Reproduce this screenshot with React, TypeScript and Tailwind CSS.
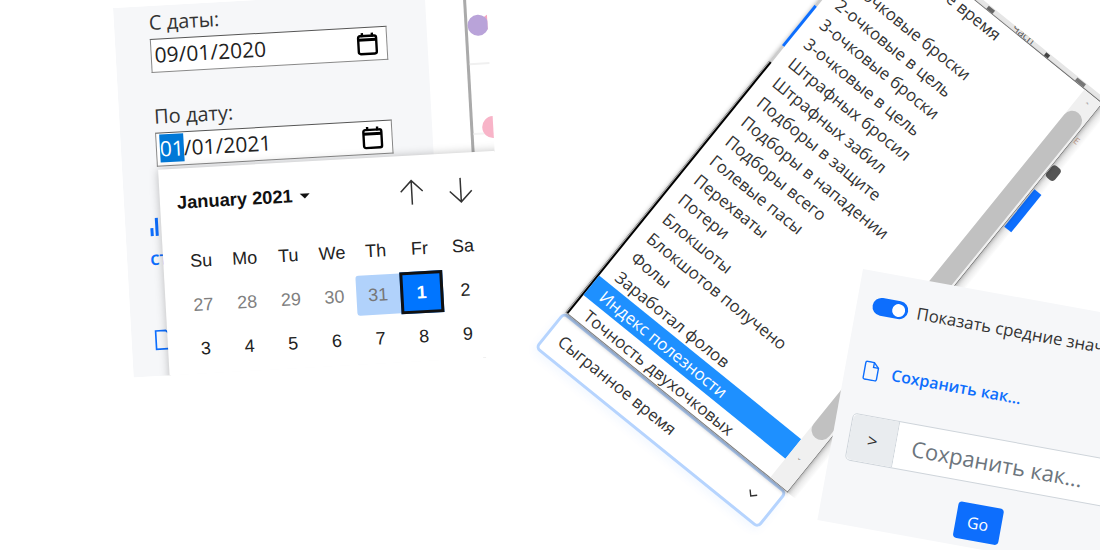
const sans = "font-['Open_Sans','Noto_Sans',sans-serif]";

const items = [
  "Сыгранное время", "Очки", "2-очковые броски", "2-очковые в цель", "3-очковые броски", "3-очковые в цель",
  "Штрафных бросил", "Штрафных забил", "Подборы в защите", "Подборы в нападении", "Подборы всего",
  "Голевые пасы", "Перехваты", "Потери", "Блокшоты", "Блокшотов получено", "Фолы", "Заработал фолов",
  "Индекс полезности", "Точность двухочковых",
];
const heads = ["Su", "Mo", "Tu", "We", "Th", "Fr", "Sa"];
const row1 = ["27", "28", "29", "30", "31", "1", "2"];
const row2 = ["3", "4", "5", "6", "7", "8", "9"];

function Cal({ className = "" }: { className?: string }) {
  return (
    <svg viewBox="0 0 24 24" className={className} fill="none" stroke="#000" strokeWidth="2.4">
      <path d="M5 4h14a2 2 0 0 1 2 2v14a2 2 0 0 1-2 2H5a2 2 0 0 1-2-2V6a2 2 0 0 1 2-2z" />
      <path d="M3 8h18" strokeWidth="3" />
      <path d="M7 1v4M17 1v4" />
    </svg>
  );
}

function DateField({ text, selected }: { text: string; selected?: boolean }) {
  return (
    <div className="flex h-[34px] w-[237px] items-center justify-between border border-[#888] border-t-[#555] bg-white pl-[3px] pr-[7px] text-[21px] text-[#222]">
      <span>
        {selected ? <span className="bg-[#0078d7] text-white">01</span> : null}
        {text}
      </span>
      <Cal className="h-[24px] w-[24px]" />
    </div>
  );
}

function DatePanel() {
  return (
    <div className={`absolute left-[113px] top-[8px] flex h-[370px] w-[373px] origin-top-left rotate-[-3.2deg] overflow-hidden bg-white ${sans}`}>
      <div className="relative h-full w-[312px] shrink-0 bg-[#f6f7f9] pl-[35px] pt-[5px] text-[#333]">
        <div className="h-[28px] text-[20px] leading-[24px]">С даты:</div>
        <DateField text="09/01/2020" />
        <div className="mt-[32px] h-[28px] text-[20px] leading-[24px]">По дату:</div>
        <DateField text="/01/2021" selected />
        <div className="-ml-[10px] mt-[47px] flex h-[22px] items-end gap-[2px]">
          <span className="h-[8px] w-[3px] bg-[#0d6efd]" />
          <span className="h-[18px] w-[3px] bg-[#0d6efd]" />
        </div>
        <div className="-ml-[12px] mt-[10px] text-[19px] font-semibold leading-[24px] text-[#0d6efd]">ст</div>
        <svg viewBox="0 0 24 28" className="-ml-[13px] mt-[58px] h-[24px] w-[20px]" fill="none" stroke="#0d6efd" strokeWidth="2">
          <path d="M3 3h12l6 6v16H3z" />
        </svg>
      </div>
      <div className="ml-[38px] h-full w-[3px] shrink-0 bg-[#aaa]" />
      <div className="relative flex-1">
        <div className="mt-[75px] h-[2px] w-full bg-[#f0f0f0]" />
        <div className="mt-[68px] h-[2px] w-full bg-[#f3f3f3]" />
        <div className="absolute left-[15px] top-[27px] h-[16px] w-[16px] rounded-full bg-[#f4a7c0]" />
        <div className="absolute left-0 top-[27px] h-[21px] w-[21px] rounded-full bg-[#b9a3d9]" />
        <div className="absolute left-[9px] top-[129px] h-[22px] w-[22px] rounded-full bg-[#f8b4c8]" />
      </div>
      <div className="absolute left-[36px] top-[164px] h-[260px] w-[360px] bg-white text-[18px] text-[#222] shadow-[0_0_10px_rgba(0,0,0,0.25)] font-['Liberation_Sans',sans-serif]">
        <div className="flex h-[71px] w-[337px] items-center justify-between pl-[17px] pr-[22px]">
          <div className="mb-[3px] flex items-center gap-[7px] text-[18.300px] font-bold text-[#111]">
            January 2021
            <span className="h-0 w-0 border-x-[5px] border-t-[5px] border-x-transparent border-t-[#111]" />
          </div>
          <div className="mt-[3px] flex gap-[21px]">
            <svg viewBox="0 0 28 28" className="h-[28px] w-[28px]" fill="none" stroke="#333" strokeWidth="1.5">
              <path d="M14 26V2M3 13 14 2l11 11" />
            </svg>
            <svg viewBox="0 0 28 28" className="h-[28px] w-[28px]" fill="none" stroke="#333" strokeWidth="1.5">
              <path d="M14 2v24M3 15l11 11 11-11" />
            </svg>
          </div>
        </div>
        <div className="ml-[16px] grid w-[306px] grid-cols-7 text-center leading-[44px]">
          {heads.map((h) => (
            <div key={h} className="h-[44px]">{h}</div>
          ))}
          {row1.map((d) => (
            <div
              key={d}
              className={
                d === "31"
                  ? "my-[2px] flex h-[40px] items-center justify-center rounded-l-[3px] bg-[#b1d2fb] text-[#777]"
                  : d === "1"
                    ? "my-[1px] flex h-[42px] items-center justify-center border-[3px] border-[#111] bg-[#0075ff] font-bold text-white"
                    : d === "2"
                      ? "flex h-[44px] items-center justify-center"
                      : "flex h-[44px] items-center justify-center text-[#808080]"
              }
            >
              {d}
            </div>
          ))}
          {row2.map((d) => (
            <div key={d} className="flex h-[44px] items-center justify-center">{d}</div>
          ))}
        </div>
      </div>
    </div>
  );
}

function ListPanel() {
  return (
    <div className={`absolute left-[880px] top-[-76px] w-[286px] origin-top-left rotate-[39deg] text-[16.800px] text-[#333] ${sans}`}>
      {/* what lies behind the open list: a sliver of the page above and to its right */}
      <div className="absolute left-[100px] top-[-6px] h-[6px] w-[196px] overflow-hidden border-b border-[#777] bg-[#e6e6e6]">
        <div className="absolute left-[36px] top-[1px] h-[5px] w-[8px] bg-[#666]" />
        <div className="absolute left-[68px] top-[-6px] text-[11px] leading-[14px] text-[#555]">Часп</div>
        <div className="absolute left-[110px] top-[1px] h-[5px] w-[5px] bg-[#444]" />
        <div className="absolute left-[150px] top-[1px] h-[5px] w-[11px] bg-[#777]" />
      </div>
      <div className="absolute left-[286px] top-0 h-[500px] w-[10px] bg-gradient-to-r from-[#ddd] to-white">
        <div className="absolute left-[1px] top-[109px] h-[48px] w-[9px] bg-[#0d6efd]" />
        <div className="absolute left-0 top-[77px] h-[15px] w-[11px] rounded-[4px] bg-[#555]" />
        <div className="absolute left-[1px] top-[40px] text-[9px] leading-[10px] text-[#b98]">E</div>
      </div>
      <div className="relative flex h-[500px] border-b border-r border-[#777] bg-white shadow-[0_2px_4px_rgba(0,0,0,0.3)]">
        <div className="flex w-[3px] shrink-0 flex-col">
          <div className="h-[104px] bg-[#ccc]" />
          <div className="h-[52px] bg-[#0d6efd]" />
          <div className="h-[20px] bg-[#ccc]" />
          <div className="flex-1 border-l border-[#bbb] bg-black" />
        </div>
        <div className="flex-1 leading-[25px]">
          {items.map((t) => (
            <div
              key={t}
              className={t === "Индекс полезности" ? "h-[25px] whitespace-nowrap bg-[#1e90ff] pl-[14px] text-white" : "h-[25px] whitespace-nowrap pl-[14px]"}
            >
              {t}
            </div>
          ))}
        </div>
        <div className="flex w-[22px] shrink-0 flex-col bg-[#f0f0f0]">
          <div className="flex h-[22px] items-center justify-center text-[9px] leading-none text-[#888]">ˆ</div>
          <div className="mr-[2px] h-[418px] rounded-t-[10px] rounded-b-[10px] bg-[#c1c1c1]" />
          <div className="flex flex-1 items-center justify-center text-[9px] leading-none text-[#888]">ˇ</div>
        </div>
      </div>
      <div className="-ml-[2px] flex h-[47px] w-[288px] items-center justify-between rounded-[6px] border-[3px] border-[#b6d4fe] bg-white pl-[12px] pr-[18px] shadow-[0_4px_10px_rgba(13,110,253,0.05)]">
        Сыгранное время
        <svg viewBox="0 0 12 8" className="h-[8px] w-[11px]" fill="none" stroke="#333" strokeWidth="1.5">
          <path d="M1 1l5 5 5-5" />
        </svg>
      </div>
    </div>
  );
}

function SavePanel() {
  return (
    <div className={`absolute left-[863px] top-[269px] h-[255px] w-[317px] origin-top-left rotate-[10.3deg] bg-[#f6f7f9] px-[16px] pt-[25px] text-[16.800px] text-[#333] ${sans}`}>
      <div className="flex h-[18px] items-center whitespace-nowrap">
        <span className="flex h-[18px] w-[36px] shrink-0 items-center justify-end rounded-full bg-[#0d6efd] pr-[3px]">
          <span className="h-[13px] w-[13px] rounded-full bg-white" />
        </span>
        <span className="ml-[9px]">Показать средние значения</span>
      </div>
      <div className="mt-[46px] flex h-[20px] items-center gap-[12px] pl-[2px] text-[#0d6efd]">
        <svg viewBox="0 0 16 20" className="h-[20px] w-[17px]" fill="none" stroke="#0d6efd" strokeWidth="1.4">
          <path d="M2.500 1h7l5 5v11.500a1.500 1.500 0 0 1-1.500 1.500H2.500A1.500 1.500 0 0 1 1 17.500v-15A1.500 1.500 0 0 1 2.500 1z" />
          <path d="M9.500 1v5h5" />
        </svg>
        <span className="text-[16px] font-semibold">Сохранить как...</span>
      </div>
      <div className="mt-[34px] flex h-[48px] rounded-[5px] border border-[#ced4da] bg-white">
        <div className="flex w-[47px] items-center justify-center rounded-l-[5px] border-r border-[#ced4da] bg-[#e9ecef] text-[18px]">&gt;</div>
        <div className="flex flex-1 items-center pl-[16px] text-[22px] text-[#6c757d]">Сохранить как...</div>
      </div>
      <div className="mt-[20px] flex justify-center">
        <div className="flex h-[37px] w-[46px] items-center justify-center rounded-[4px] bg-[#0d6efd] text-[16px] text-white">Go</div>
      </div>
    </div>
  );
}

export default function App() {
  return (
    <div className="relative h-[550px] w-[1100px] overflow-hidden bg-white">
      <DatePanel />
      <ListPanel />
      <SavePanel />
    </div>
  );
}
